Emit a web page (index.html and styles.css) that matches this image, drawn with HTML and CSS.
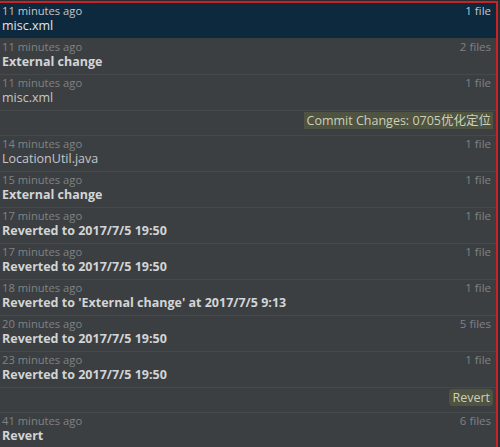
FILE: index.html
```html
<!DOCTYPE html>
<html>
<head>
<meta charset="utf-8">
<link rel="stylesheet" href="styles.css">
</head>
<body>
<div class="frame">
  <div class="list">
    <div class="row selected">
      <div class="info"><div class="time">11 minutes ago</div><div class="name">misc.xml</div></div>
      <div class="count">1 file</div>
    </div>
    <div class="row">
      <div class="info"><div class="time">11 minutes ago</div><div class="name bold">External change</div></div>
      <div class="count">2 files</div>
    </div>
    <div class="row">
      <div class="info"><div class="time">11 minutes ago</div><div class="name">misc.xml</div></div>
      <div class="count">1 file</div>
    </div>
    <div class="label-row"><span class="badge">Commit Changes: 0705优化定位</span></div>
    <div class="row">
      <div class="info"><div class="time">14 minutes ago</div><div class="name">LocationUtil.java</div></div>
      <div class="count">1 file</div>
    </div>
    <div class="row">
      <div class="info"><div class="time">15 minutes ago</div><div class="name bold">External change</div></div>
      <div class="count">1 file</div>
    </div>
    <div class="row">
      <div class="info"><div class="time">17 minutes ago</div><div class="name bold">Reverted to 2017/7/5 19:50</div></div>
      <div class="count">1 file</div>
    </div>
    <div class="row">
      <div class="info"><div class="time">17 minutes ago</div><div class="name bold">Reverted to 2017/7/5 19:50</div></div>
      <div class="count">1 file</div>
    </div>
    <div class="row">
      <div class="info"><div class="time">18 minutes ago</div><div class="name bold">Reverted to 'External change' at 2017/7/5 9:13</div></div>
      <div class="count">1 file</div>
    </div>
    <div class="row">
      <div class="info"><div class="time">20 minutes ago</div><div class="name bold">Reverted to 2017/7/5 19:50</div></div>
      <div class="count">5 files</div>
    </div>
    <div class="row">
      <div class="info"><div class="time">23 minutes ago</div><div class="name bold">Reverted to 2017/7/5 19:50</div></div>
      <div class="count">1 file</div>
    </div>
    <div class="label-row"><span class="badge round">Revert</span></div>
    <div class="row">
      <div class="info"><div class="time">41 minutes ago</div><div class="name bold">Revert</div></div>
      <div class="count">6 files</div>
    </div>
  </div>
</div>
</body>
</html>
```
FILE: styles.css
```css
html, body {
  margin: 0;
  padding: 0;
  background: #2b2b2b;
  width: 500px;
  height: 447px;
  overflow: hidden;
}
.frame {
  padding-top: 1px;
  width: 498px;
}
.list {
  border-top: 2px solid #c8232c;
  border-right: 2px solid #c8232c;
  background: #3c3f41;
  height: 444px;
  font-family: "Open Sans", "Noto Sans CJK SC", sans-serif;
}
.row {
  display: flex;
  justify-content: space-between;
  align-items: flex-start;
  height: 35px;
  border-bottom: 1px solid #46494b;
  padding: 0 5px 0 2px;
}
.row.selected {
  background: #0d293e;
  border-bottom-color: #3a3d3f;
}
.time {
  color: #7f8285;
  font-size: 11.2px;
  line-height: 15px;
}
.name {
  color: #c4c6c8;
  font-size: 12.5px;
  line-height: 16px;
}
.name.bold {
  font-weight: bold;
  color: #d2d4d6;
}
.count {
  color: #7f8285;
  font-size: 11.5px;
  line-height: 15px;
}
.selected .time, .selected .count {
  color: #c3c7cb;
}
.selected .name {
  color: #e2e4e6;
}
.label-row {
  display: flex;
  justify-content: flex-end;
  align-items: flex-start;
  height: 23px;
  padding-top: 1px;
  border-bottom: 1px solid #46494b;
  padding-right: 3px;
}
.badge {
  background: #4e5342;
  color: #cdd0b8;
  font-size: 12.5px;
  line-height: 17px;
  padding: 0 2px 0 3px;
}
.badge.round {
  border-radius: 4px;
  padding: 0 3px;
}
```
